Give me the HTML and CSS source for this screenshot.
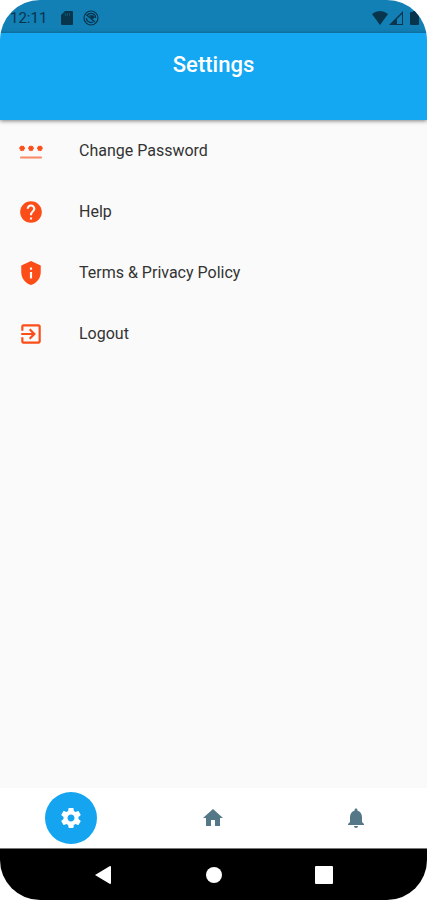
FILE: index.html
```html
<!DOCTYPE html>
<html lang="en">
<head>
<meta charset="utf-8">
<meta name="viewport" content="width=device-width, initial-scale=1">
<title>Settings</title>
<link rel="stylesheet" href="styles.css">
</head>
<body>
<div class="screen">
  <div class="status">
    <span class="time">12:11</span>
    <svg class="status-icon sd" viewBox="0 0 12 14" aria-hidden="true"><path fill="currentColor" d="M4 0h7q1 0 1 1v12q0 1-1 1H1q-1 0-1-1V4z"/><path fill="#127fb5" d="M4 2h1v3H4zm2 0h1v3H6zm2 0h1v3H8z" opacity=".4"/></svg>
    <svg class="status-icon" viewBox="0 0 24 24" fill="none" stroke="currentColor" aria-hidden="true"><circle cx="12" cy="12" r="10.500" stroke-width="1.800"/><path stroke-width="2" d="M6 8a7.500 7.500 0 0 1 12 0l1 4M5 12a7 7 0 0 0 10 6M5 7l13 11"/><path fill="currentColor" stroke="none" d="M9 8l6 0 3 3-4 3z"/></svg>
    <span class="spacer"></span>
    <svg class="signal" viewBox="0 0 47 16" aria-hidden="true"><path fill="currentColor" d="M0 4Q8-2 16 4L8 15z"/><path fill="currentColor" fill-rule="evenodd" d="M17 15L31 1v14zM25 9v5h5V4z"/><path fill="currentColor" d="M38 3q0-1 1-1h2V1h5v1h1v12q0 1-1 1h-7q-1 0-1-1z"/></svg>
  </div>
  <header class="header"><h1>Settings</h1></header>
  <main>
    <ul class="list">
      <li><a class="row" href="#password">
        <svg class="icon" viewBox="0 0 24 24" fill="currentColor" aria-hidden="true"><path opacity=".65" d="M2 17h20v2H2z"/><g fill="none" stroke="currentColor" stroke-width="1.700"><path id="star" d="M1.200 9.500h5.200M2.500 7.300l2.600 4.400M5.100 7.300l-2.600 4.400"/><use href="#star" x="8.200"/><use href="#star" x="16.400"/></g></svg>
        <span>Change Password</span></a></li>
      <li><a class="row" href="#help">
        <svg class="icon" viewBox="0 0 24 24" fill="currentColor" aria-hidden="true"><path d="M12 2C6.480 2 2 6.480 2 12s4.480 10 10 10 10-4.480 10-10S17.520 2 12 2zm1 17h-2v-2h2v2zm2.070-7.750l-.9.920C13.450 12.900 13 13.500 13 15h-2v-.5c0-1.100.450-2.100 1.170-2.830l1.240-1.260c.370-.360.590-.860.590-1.410 0-1.100-.9-2-2-2s-2 .9-2 2H8c0-2.210 1.790-4 4-4s4 1.790 4 4c0 .880-.360 1.680-.930 2.250z"/></svg>
        <span>Help</span></a></li>
      <li><a class="row" href="#terms">
        <svg class="icon" viewBox="0 0 24 24" fill="currentColor" aria-hidden="true"><path d="M12 1L3 5v6c0 5.550 3.840 10.740 9 12 5.160-1.260 9-6.450 9-12V5l-9-4zm1 16h-2v-6h2v6zm0-8h-2V7h2v2z"/></svg>
        <span>Terms &amp; Privacy Policy</span></a></li>
      <li><a class="row" href="#logout">
        <svg class="icon" viewBox="0 0 24 24" fill="currentColor" aria-hidden="true"><path d="M10.090 15.590L11.500 17l5-5-5-5-1.410 1.410L12.670 11H3v2h9.670l-2.580 2.590zM19 3H5a2 2 0 0 0-2 2v4h2V5h14v14H5v-4H3v4a2 2 0 0 0 2 2h14c1.100 0 2-.9 2-2V5c0-1.100-.9-2-2-2z"/></svg>
        <span>Logout</span></a></li>
    </ul>
  </main>
  <nav class="tabs" aria-label="Main">
    <button class="tab active" type="button" aria-label="Settings"><svg viewBox="0 0 24 24" fill="currentColor" aria-hidden="true"><path d="M19.430 12.980c.040-.320.070-.640.070-.980s-.030-.660-.070-.980l2.110-1.650c.190-.150.240-.420.120-.640l-2-3.460c-.120-.220-.390-.300-.610-.220l-2.490 1c-.520-.400-1.080-.730-1.690-.980l-.380-2.650C14.460 2.180 14.250 2 14 2h-4c-.250 0-.460.180-.490.420l-.380 2.650c-.610.250-1.170.590-1.690.980l-2.490-1c-.230-.090-.490 0-.610.220l-2 3.460c-.130.220-.070.490.120.640l2.110 1.650c-.040.320-.070.650-.070.980s.030.660.070.980l-2.110 1.650c-.190.150-.240.420-.120.640l2 3.460c.120.220.390.300.610.220l2.490-1c.520.400 1.080.730 1.690.980l.380 2.650c.030.240.240.420.490.420h4c.250 0 .460-.180.490-.420l.380-2.650c.610-.250 1.170-.590 1.690-.980l2.490 1c.230.090.490 0 .610-.220l2-3.460c.120-.220.070-.490-.120-.640l-2.110-1.650zM12 15.500c-1.930 0-3.500-1.570-3.500-3.500s1.570-3.500 3.500-3.500 3.500 1.570 3.500 3.500-1.570 3.500-3.500 3.500z"/></svg></button>
    <button class="tab" type="button" aria-label="Home"><svg viewBox="0 0 24 24" fill="currentColor" aria-hidden="true"><path d="M10 20v-6h4v6h5v-8h3L12 3 2 12h3v8z"/></svg></button>
    <button class="tab" type="button" aria-label="Notifications"><svg viewBox="0 0 24 24" fill="currentColor" aria-hidden="true"><path d="M12 22c1.100 0 2-.9 2-2h-4c0 1.100.890 2 2 2zm6-6v-5c0-3.070-1.640-5.640-4.500-6.320V4c0-.830-.670-1.500-1.500-1.500s-1.500.670-1.500 1.500v.680C7.630 5.360 6 7.920 6 11v5l-2 2v1h16v-1l-2-2z"/></svg></button>
  </nav>
  <div class="system">
    <button type="button" aria-label="Back"><svg viewBox="0 0 20 20" fill="currentColor" aria-hidden="true"><path d="M1 10L16 1q1 0 1 1v16q0 1-1 1z"/></svg></button>
    <button type="button" aria-label="System home"><svg viewBox="0 0 20 20" fill="currentColor" aria-hidden="true"><circle cx="10" cy="10" r="8"/></svg></button>
    <button type="button" aria-label="Recent apps"><svg viewBox="0 0 20 20" fill="currentColor" aria-hidden="true"><rect x="1" y="1" width="18" height="18" rx="1"/></svg></button>
  </div>
</div>
</body>
</html>
```
FILE: styles.css
```css
* { box-sizing: border-box; }
body {
  margin: 0;
  background: #fff;
  font-family: Roboto, "Liberation Sans", sans-serif;
}
button {
  padding: 0;
  border: 0;
  background: none;
  color: inherit;
}
svg { display: block; flex: none; }
.screen {
  display: flex;
  flex-direction: column;
  min-height: 100vh;
  border-radius: 40px;
  overflow: hidden;
  background: #fafafa;
}
.status {
  display: flex;
  align-items: center;
  height: 33px;
  padding: 2px 8px 0 10px;
  background: #127fb5;
  color: #08344c;
}
.time { font-size: 15px; line-height: 20px; }
.status-icon { width: 16px; height: 16px; margin-left: 10px; }
.sd { width: 12px; height: 14px; margin-left: 14px; }
.spacer { flex: 1; }
.signal { width: 47px; height: 16px; }
.header {
  height: 87px;
  padding-top: 18px;
  background: #14a8f3;
  box-shadow: 0 1px 4px rgba(0, 0, 0, .5);
  text-align: center;
}
h1 {
  margin: 0;
  color: #fff;
  font-size: 22px;
  line-height: 28px;
  font-weight: 500;
}
main { flex: 1; }
.list { margin: 0; padding: 0; list-style: none; }
.row {
  display: flex;
  align-items: center;
  gap: 35px;
  height: 61px;
  padding: 0 18px;
  color: #333;
  font-size: 16px;
  line-height: 20px;
  text-decoration: none;
}
.icon { width: 26px; height: 26px; color: #fc4c17; }
.tabs {
  display: grid;
  grid-template-columns: repeat(3, 1fr);
  place-items: center;
  height: 60px;
  background: #fff;
  color: #557888;
}
.tab {
  display: grid;
  place-items: center;
  width: 52px;
  height: 52px;
  border-radius: 50%;
}
.tab svg { width: 24px; height: 24px; }
.active { background: #14a4f0; color: #fff; }
.system {
  display: flex;
  justify-content: center;
  align-items: center;
  gap: 90px;
  height: 52px;
  border-top: 1px solid #777;
  background: #000;
  color: #fff;
}
.system svg { width: 20px; height: 20px; }
```
